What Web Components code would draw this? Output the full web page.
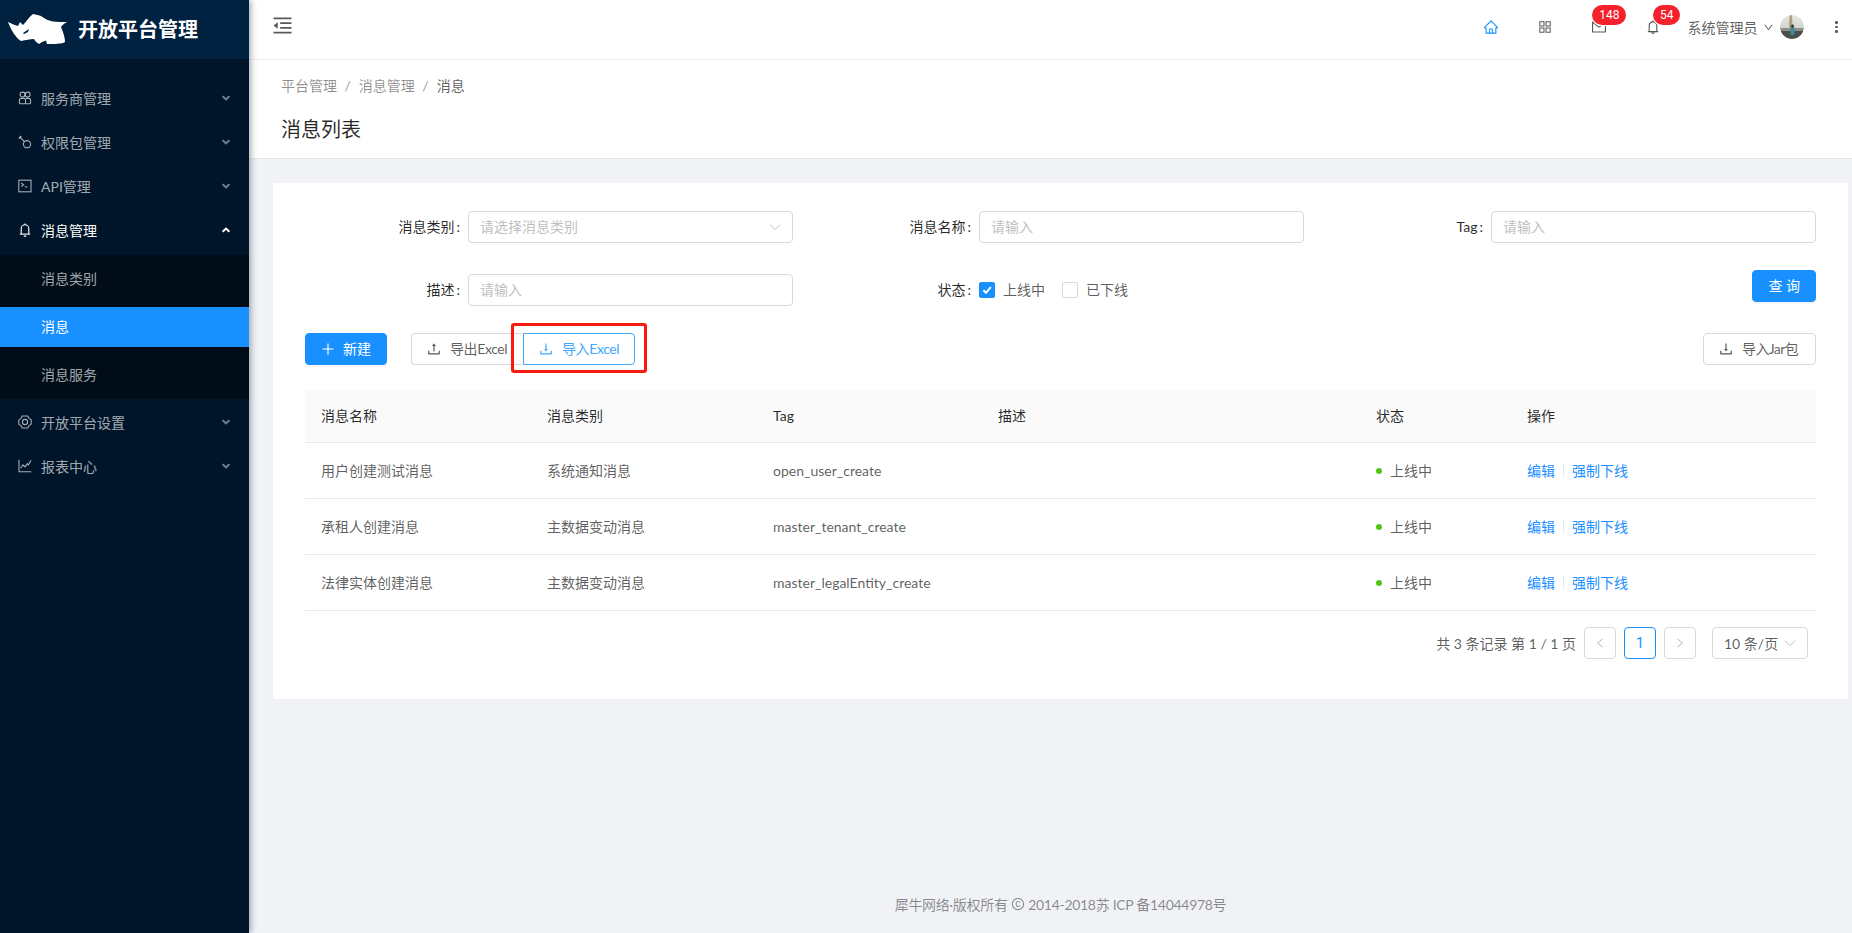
<!DOCTYPE html>
<html lang="zh-CN">
<head>
<meta charset="utf-8">
<title>消息列表</title>
<style>
html,body{margin:0;padding:0;height:100%;overflow:hidden}
body{font:14px/1.5 Lato,"Noto Sans CJK SC",sans-serif;color:rgba(0,0,0,.65);background:#f0f2f5}
</style>
</head>
<body>
<x-app>
  <x-sidebar slot="side">
    <x-menu-item icon="team">服务商管理</x-menu-item>
    <x-menu-item icon="key">权限包管理</x-menu-item>
    <x-menu-item icon="term">API管理</x-menu-item>
    <x-menu-item icon="mbell" open>消息管理</x-menu-item>
    <x-submenu>
      <x-sub-item>消息类别</x-sub-item>
      <x-sub-item selected>消息</x-sub-item>
      <x-sub-item>消息服务</x-sub-item>
    </x-submenu>
    <x-menu-item icon="gear">开放平台设置</x-menu-item>
    <x-menu-item icon="mchart">报表中心</x-menu-item>
  </x-sidebar>

  <x-topbar slot="main"></x-topbar>
  <x-page-head slot="main"></x-page-head>
  <x-card slot="main">
    <x-form-row>
      <x-field label="消息类别"><x-input placeholder="请选择消息类别" select></x-input></x-field>
      <x-field label="消息名称"><x-input placeholder="请输入"></x-input></x-field>
      <x-field label="Tag"><x-input placeholder="请输入"></x-input></x-field>
    </x-form-row>
    <x-form-row>
      <x-field label="描述"><x-input placeholder="请输入"></x-input></x-field>
      <x-field label="状态"><x-check checked>上线中</x-check><x-check>已下线</x-check></x-field>
      <x-query-cell><x-btn primary style="padding:0 15px">查 询</x-btn></x-query-cell>
    </x-form-row>
    <x-toolbar>
      <x-btn primary icon="plus">新建</x-btn>
      <x-btn icon="upload" noright style="margin-left:24px;width:112px" ls="-.4">导出Excel</x-btn>
      <x-marked><x-btn icon="download" hot style="width:112px" ls="-.4">导入Excel</x-btn></x-marked>
      <x-btn icon="download" style="margin-left:auto;width:113px" ls="-.6">导入Jar包</x-btn>
    </x-toolbar>
    <x-msg-table>
      <x-row head><span>消息名称</span><span>消息类别</span><span>Tag</span><span>描述</span><span>状态</span><span>操作</span></x-row>
      <x-row><span>用户创建测试消息</span><span>系统通知消息</span><span>open_user_create</span><span></span><x-status>上线中</x-status><x-actions></x-actions></x-row>
      <x-row><span>承租人创建消息</span><span>主数据变动消息</span><span>master_tenant_create</span><span></span><x-status>上线中</x-status><x-actions></x-actions></x-row>
      <x-row><span>法律实体创建消息</span><span>主数据变动消息</span><span>master_legalEntity_create</span><span></span><x-status>上线中</x-status><x-actions></x-actions></x-row>
    </x-msg-table>
    <x-pager></x-pager>
  </x-card>
  <x-foot slot="main"></x-foot>
</x-app>

<script>
const P={
home:'M946.5 505L560.1 118.8l-25.9-25.9a31.5 31.5 0 0 0-44.4 0L77.5 505a63.9 63.9 0 0 0-18.8 46c.4 35.2 29.7 63.3 64.9 63.3h42.5V940h691.8V614.3h43.4c17.1 0 33.2-6.7 45.3-18.8a63.6 63.6 0 0 0 18.7-45.3c0-17-6.7-33.1-18.8-45.2zM568 868H456V664h112v204zm217.9-325.7V868H632V640c0-22.1-17.9-40-40-40H432c-22.1 0-40 17.9-40 40v228H238.1V542.3h-96l370-369.7 23.1 23.1L882 542.3h-96.1z',
apps:'M464 144H160c-8.8 0-16 7.2-16 16v304c0 8.8 7.2 16 16 16h304c8.8 0 16-7.2 16-16V160c0-8.8-7.2-16-16-16zm-52 268H212V212h200v200zm452-268H560c-8.8 0-16 7.2-16 16v304c0 8.8 7.2 16 16 16h304c8.8 0 16-7.2 16-16V160c0-8.8-7.2-16-16-16zm-52 268H612V212h200v200zM464 544H160c-8.8 0-16 7.2-16 16v304c0 8.8 7.2 16 16 16h304c8.8 0 16-7.2 16-16V560c0-8.8-7.2-16-16-16zm-52 268H212V612h200v200zm452-268H560c-8.8 0-16 7.2-16 16v304c0 8.8 7.2 16 16 16h304c8.8 0 16-7.2 16-16V560c0-8.8-7.2-16-16-16zm-52 268H612V612h200v200z',
mail:'M928 160H96c-17.7 0-32 14.3-32 32v640c0 17.7 14.3 32 32 32h832c17.7 0 32-14.3 32-32V192c0-17.7-14.3-32-32-32zm-40 110.8V792H136V270.8l-27.6-21.5 39.3-50.5 42.8 33.3h643.1l42.8-33.3 39.3 50.5-27.7 21.5zM833.6 232L512 482 190.4 232l-42.8-33.3-39.3 50.5 27.6 21.5 341.6 265.6a55.99 55.99 0 0 0 68.7 0L888 270.8l27.6-21.5-39.3-50.5-42.7 33.2z',
bell:'M816 768h-24V428c0-141.1-104.3-257.7-240-277.1V112c0-22.1-17.9-40-40-40s-40 17.9-40 40v38.9c-135.7 19.4-240 136-240 277.1v340h-24c-17.7 0-32 14.3-32 32v32c0 4.4 3.6 8 8 8h216c0 61.8 50.2 112 112 112s112-50.2 112-112h216c4.4 0 8-3.6 8-8v-32c0-17.7-14.3-32-32-32zM512 888c-26.5 0-48-21.5-48-48h96c0 26.5-21.5 48-48 48zM304 768V428c0-55.6 21.6-107.8 60.9-147.1S456.4 220 512 220c55.6 0 107.8 21.6 147.1 60.9S720 372.4 720 428v340H304z',
down:'M884 256h-75c-5.1 0-9.9 2.5-12.9 6.6L512 654.2 227.9 262.6c-3-4.1-7.8-6.6-12.9-6.6h-75c-6.5 0-10.3 7.4-6.5 12.7l352.6 486.1c12.8 17.6 39 17.6 51.7 0l352.6-486.1c3.9-5.3.1-12.7-6.4-12.7z',
upload:'M400 317.7h73.9V656c0 4.4 3.6 8 8 8h60c4.4 0 8-3.6 8-8V317.7H624c6.7 0 10.4-7.7 6.3-12.9L518.3 163a8 8 0 0 0-12.6 0l-112 141.7c-4.1 5.3-.4 13 6.3 13zM878 626h-60c-4.4 0-8 3.6-8 8v154H214V634c0-4.4-3.6-8-8-8h-60c-4.4 0-8 3.6-8 8v198c0 17.7 14.3 32 32 32h684c17.7 0 32-14.3 32-32V634c0-4.4-3.6-8-8-8z',
download:'M505.7 661a8 8 0 0 0 12.6 0l112-141.7c4.1-5.2.4-12.9-6.3-12.9h-74.1V168c0-4.4-3.6-8-8-8h-60c-4.4 0-8 3.6-8 8v338.3H400c-6.7 0-10.4 7.7-6.3 12.9l112 141.8zM878 626h-60c-4.4 0-8 3.6-8 8v154H214V634c0-4.4-3.6-8-8-8h-60c-4.4 0-8 3.6-8 8v198c0 17.7 14.3 32 32 32h684c17.7 0 32-14.3 32-32V634c0-4.4-3.6-8-8-8z',
plus:'M482 152h60q8 0 8 8v704q0 8-8 8h-60q-8 0-8-8V160q0-8 8-8zM176 474h672q8 0 8 8v60q0 8-8 8H176q-8 0-8-8v-60q0-8 8-8z',
fold:'M408 442h504v-72H408zM408 654h504v-72H408zM912 160H112v72h800zM912 792H112v72h800zM112 512 300 372V652z',
left:'M724 218.3V141c0-6.7-7.7-10.4-12.9-6.3L260.3 486.8a31.86 31.86 0 0 0 0 50.3l450.8 352.1c5.3 4.1 12.9.4 12.9-6.3v-77.3c0-4.9-2.3-9.6-6.1-12.6l-360-281 360-281.1c3.8-3 6.1-7.7 6.1-12.6z',
right:'M765.7 486.8L314.9 134.7A7.97 7.97 0 0 0 302 141v77.3c0 4.9 2.3 9.6 6.1 12.6l360 281.1-360 281.1c-3.9 3-6.1 7.7-6.1 12.6V883c0 6.7 7.7 10.4 12.9 6.3l450.8-352.1a31.96 31.96 0 0 0 0-50.4z',
copy:'M512 64C264.6 64 64 264.6 64 512s200.6 448 448 448 448-200.6 448-448S759.4 64 512 64zm0 820c-205.4 0-372-166.6-372-372s166.6-372 372-372 372 166.6 372 372-166.6 372-372 372zm5.6-532.7c53 0 89 33.8 93 83.4.3 4.2 3.8 7.4 8 7.4h56.7c2.6 0 4.7-2.1 4.7-4.7 0-86.7-68.4-147.4-162.7-147.4C407.4 290 344 364.2 344 486v52.3C344 659.8 407.4 734 517.3 734c94 0 162.7-58.8 162.7-141.4 0-2.6-2.1-4.7-4.7-4.7h-56.8c-4.2 0-7.6 3.2-8 7.3-4.2 46.1-40.1 77.8-93 77.8-65.3 0-102.1-47.9-102.1-133.6v-52.6c.1-87 37-135.5 102.2-135.5z'
};
const STROKE={
team:'<g fill="none" stroke="currentColor" stroke-width="1.1"><circle cx="4.6" cy="3.6" r="2.5"/><circle cx="9.6" cy="3.6" r="2.5"/><path d="M1.4 9.2a1.8 1.8 0 0 1 1.8-1.8h2.6a1.8 1.8 0 0 1 1.8 1.8v2.6a1 1 0 0 1-1 1H2.4a1 1 0 0 1-1-1z"/><path d="M7.6 7.4h3.2a1.8 1.8 0 0 1 1.8 1.8v2.6a1 1 0 0 1-1 1H7.6"/></g>',
key:'<g fill="none" stroke="currentColor" stroke-width="1.1"><circle cx="9" cy="9.2" r="3.6"/><path d="M6.4 6.6 1.9 2.1"/><path d="M.9 3.4 3.3 1" stroke-width="1.4"/></g>',
term:'<g fill="none" stroke="currentColor" stroke-width="1.1"><rect x=".8" y="1.2" width="12.2" height="11.6"/><path d="M3.2 4 5.6 5.8 3.2 7.6"/><path d="M6.8 7.9h2.6"/></g>',
gear:'<g fill="none" stroke="currentColor" stroke-width="1.1"><path d="M4.2 1h5.6l1.2 2.4 2.2 1.5v4.2L11 10.6 9.8 13H4.2L3 10.6.8 9.1V4.9L3 3.4z" stroke-linejoin="round"/><circle cx="7" cy="7" r="2.6"/></g>',
mbell:'<g fill="none" stroke="currentColor" stroke-width="1.1"><path d="M3.2 11V5.6a3.8 3.8 0 0 1 7.6 0V11"/><path d="M1.8 11.1h10.4"/><path d="M5.8 13.1h2.4" stroke-width="1.3"/><path d="M7 .4v1.4"/></g>',
mchart:'<g fill="none" stroke="currentColor" stroke-width="1.1"><path d="M1 .8v12h12.4"/><path d="M2.6 9.2 5 5.8l2 2 2.3-3.2 1 1.4 2.7-4.6"/></g>'
};
const icon=(n,s=14,extra='')=>STROKE[n]
  ?`<svg width="${s}" height="${s}" viewBox="0 0 14 14" style="display:block;flex:none;${extra}" aria-hidden="true">${STROKE[n]}</svg>`
  :`<svg width="${s}" height="${s}" viewBox="0 0 1024 1024" fill="currentColor" style="display:block;flex:none;${extra}" aria-hidden="true"><path d="${P[n]}"/></svg>`;

function def(name,css,html){
  customElements.define(name,class extends HTMLElement{
    connectedCallback(){
      if(this.shadowRoot)return;
      this.attachShadow({mode:'open'}).innerHTML=`<style>${css}</style>`+(typeof html==='function'?html(this):html);
    }
  });
}

def('x-app',`:host{display:flex;height:100vh;overflow:hidden}
.m{flex:1;min-width:0;display:flex;flex-direction:column}`,
`<slot name="side"></slot><div class="m"><slot name="main"></slot></div>`);

const RHINO=`<svg width="66" height="42" viewBox="0 0 66 42" style="display:block;flex:none;margin-left:4px" aria-hidden="true"><path fill="#fff" d="M4 13C8 15 11 16 14 17L16 13 19 16C22 13 25 8 29 5 32 6 35 6 37 7 41 10 45 12 49 12.5 53 13 58 13 63 13 60 15 58 16 57 18 59 23 61 28 61 33 58 35 50 35 43 35L42 31.5 38 33 35 35C33 34 31 32 30 30 26 30 22 31 17 32 12 29 7 21 4 13Z"/><path fill="#002140" d="M19 24 25 20 24 23 20 25Z"/></svg>`;
def('x-sidebar',`:host{display:block;flex:none;width:249px;height:100vh;background:#001529;box-shadow:2px 0 6px rgba(0,21,41,.35);position:relative;z-index:3}
.logo{height:59px;background:#002140;display:flex;align-items:center;box-sizing:border-box;padding-top:1px}
.t{margin-left:8px;margin-top:-2px;font-size:20px;font-weight:700;color:#fff;line-height:30px;font-family:"Noto Sans CJK SC",sans-serif}
.menu{padding-top:20px;display:flex;flex-direction:column;gap:4px}`,
`<div class="logo">${RHINO}<span class="t">开放平台管理</span></div><div class="menu"><slot></slot></div>`);

def('x-menu-item',`:host{display:flex;align-items:center;height:40px;padding-left:18px;color:rgba(255,255,255,.65);font-size:14px}
:host([open]){color:#fff}
.l{margin-left:9px;flex:1;margin-top:-2px}
.c{margin-right:19px;display:block;margin-top:-2px}`,
h=>`${icon(h.getAttribute('icon'),14,'margin-top:-2px')}<span class="l"><slot></slot></span>
<svg class="c" width="8" height="6" viewBox="0 0 8 6" aria-hidden="true"><path d="${h.hasAttribute('open')?'M.6 4.8 4 1.6l3.4 3.2':'M.6 1.2 4 4.4l3.4-3.2'}" fill="none" stroke="currentColor" stroke-opacity="${h.hasAttribute('open')?1:.7}" stroke-width="2"/></svg>`);

def('x-submenu',`:host{display:flex;flex-direction:column;gap:8px;background:#000c17;padding:4px 0}`,`<slot></slot>`);
def('x-sub-item',`:host{display:flex;align-items:center;height:40px;padding-left:41px;color:rgba(255,255,255,.65);padding-bottom:2px;box-sizing:border-box}
:host([selected]){background:#1890ff;color:#fff}`,`<slot></slot>`);

def('x-topbar',`:host{display:flex;align-items:flex-start;flex:none;height:60px;box-sizing:border-box;background:#fff;border-bottom:1px solid #f0f0f0;color:rgba(0,0,0,.65)}
.fold{margin:14px 0 0 22px;color:rgba(0,0,0,.65)}
.r{margin-left:auto;display:flex;align-items:center;height:54px}
.cell{width:54px;height:54px;display:flex;align-items:center;justify-content:center;position:relative}
.badge{position:absolute;top:5px;right:0;height:20px;line-height:20px;padding:0 7px;border-radius:10px;background:#f5222d;color:#fff;font-size:12px;font-family:Roboto,sans-serif;box-shadow:0 0 0 1px #fff}
.name{margin-left:7px;white-space:nowrap}
.avatar{margin-left:6px;display:block;border-radius:50%}
.more{margin-left:31px;margin-right:14px;display:flex;flex-direction:column;gap:2.2px}
.more i{display:block;width:2.6px;height:2.6px;background:#595959;border-radius:50%}`,
`<span class="fold">${icon('fold',23)}</span>
<div class="r">
 <div class="cell" style="color:#1890ff">${icon('home',16)}</div>
 <div class="cell">${icon('apps',16)}</div>
 <div class="cell">${icon('mail',16)}<span class="badge">148</span></div>
 <div class="cell">${icon('bell',16)}<span class="badge">54</span></div>
 <span class="name">系统管理员</span>
 <span style="margin-left:6px">${icon('down',11)}</span>
 <svg class="avatar" width="24" height="24" viewBox="0 0 24 24" aria-hidden="true"><defs><clipPath id="c"><circle cx="12" cy="12" r="12"/></clipPath><linearGradient id="s" x1="0" y1="0" x2="0" y2="1"><stop offset="0" stop-color="#e8e6e0"/><stop offset="1" stop-color="#c4c6c2"/></linearGradient></defs><g clip-path="url(#c)"><rect width="24" height="24" fill="url(#s)"/><rect x="0" y="13" width="24" height="3" fill="#8d8f86"/><rect y="16" width="24" height="8" fill="#4a4f4c"/><path d="M9.5 0h2.5l.7 14H9z" fill="#b09f7d"/><rect x="10.5" y="12" width="4" height="8" rx="1" fill="#3f8a96"/><circle cx="12.5" cy="11" r="1.5" fill="#3a2f2a"/></g></svg>
 <div class="more"><i></i><i></i><i></i></div>
</div>`);

def('x-page-head',`:host{display:block;flex:none;height:99px;box-sizing:border-box;background:#fff;border-bottom:1px solid #e8e8e8;padding:15px 0 0 32px}
.b{display:flex;line-height:21px;color:rgba(0,0,0,.45)}
.s{margin:0 8px 0 7.5px}
.cur{color:rgba(0,0,0,.65)}
h1{margin:19px 0 0;font-size:20px;font-weight:400;line-height:28px;color:rgba(0,0,0,.85)}`,
`<div class="b"><span>平台管理</span><span class="s">/</span><span>消息管理</span><span class="s">/</span><span class="cur">消息</span></div><h1>消息列表</h1>`);

def('x-card',`:host{display:block;flex:none;margin:24px 4px 0 24px;background:#fff;padding:28px 32px 40px 32px;height:516px;box-sizing:border-box}`,`<slot></slot>`);
def('x-form-row',`:host{display:grid;grid-template-columns:488px 511px 512px;height:32px;margin-bottom:31px}`,`<slot></slot>`);
def('x-field',`:host{display:flex;align-items:center;justify-content:flex-end;min-width:0}
.lab{white-space:nowrap;color:rgba(0,0,0,.85);margin-right:8px;padding-bottom:2px}
.col{margin-left:2px}
.c{display:flex;align-items:center;flex:none;width:325px}`,
h=>`<span class="lab">${h.getAttribute('label')}<span class="col">:</span></span><div class="c"><slot></slot></div>`);
def('x-input',`:host{display:flex;align-items:center;width:100%;height:32px;box-sizing:border-box;border:1px solid #d9d9d9;border-radius:4px;padding:0 11px 2px;color:#bfbfbf;background:#fff}
span{flex:1}
svg{margin-top:2px}`,
h=>`<span>${h.getAttribute('placeholder')}</span>${h.hasAttribute('select')?'<svg width="12" height="12" viewBox="0 0 12 12" aria-hidden="true"><path d="M1 3.6 6 8.6l5-5" fill="none" stroke="#bfbfbf" stroke-width="1"/></svg>':''}`);
def('x-check',`:host{display:inline-flex;align-items:center;margin-right:17px;color:rgba(0,0,0,.65)}
.b{width:16px;height:16px;box-sizing:border-box;border:1px solid #d9d9d9;border-radius:2px;background:#fff;margin-right:8px;display:flex;align-items:center;justify-content:center}
:host([checked]) .b{background:#1890ff;border-color:#1890ff}
.t{padding-bottom:1px}`,
h=>`<span class="b">${h.hasAttribute('checked')?'<svg width="12" height="12" viewBox="0 0 12 12" aria-hidden="true"><path d="M2.4 6.2 5 8.8l4.8-5.6" fill="none" stroke="#fff" stroke-width="2"/></svg>':''}</span><span class="t"><slot></slot></span>`);
def('x-query-cell',`:host{display:flex;justify-content:flex-end;margin-top:-4px}`,`<slot></slot>`);

def('x-btn',`:host{display:inline-flex;align-items:center;height:32px;box-sizing:border-box;padding:0 15px 0 14px;border:1px solid #d9d9d9;border-radius:4px;background:#fff;color:rgba(0,0,0,.65);white-space:nowrap;flex:none;gap:8px}
:host([primary]){background:#1890ff;border-color:#1890ff;color:#fff;box-shadow:0 2px 0 rgba(0,0,0,.035);gap:7px}
:host([hot]){border-color:#40a9ff;color:#40a9ff;position:relative;z-index:1;border-radius:0 4px 4px 0}
:host([noright]){border-right-color:transparent;border-radius:4px 0 0 4px}
.t{padding-bottom:2px}`,
h=>`${h.getAttribute('icon')?icon(h.getAttribute('icon'),16):''}<span class="t" style="letter-spacing:${h.getAttribute('ls')||0}px"><slot></slot></span>`);
def('x-toolbar',`:host{display:flex;align-items:center;height:32px;margin-top:-4px;margin-bottom:25px}`,`<slot></slot>`);
def('x-marked',`:host{display:block;position:relative}
.box{position:absolute;left:-12px;right:-12px;top:-10px;bottom:-8px;border:3px solid #fa1a10;border-radius:3px;pointer-events:none;z-index:2;box-sizing:border-box}`,
`<slot></slot><span class="box"></span>`);

def('x-msg-table',`:host{display:block}`,`<slot></slot>`);
def('x-row',`:host{display:grid;grid-template-columns:226px 226px 225px 378px 151px 305px;align-items:center;height:56px;box-sizing:border-box;border-bottom:1px solid #e8e8e8;padding-bottom:1px}
:host([head]){height:53px;background:#fafafa;color:rgba(0,0,0,.85);padding-bottom:2px}
::slotted(*){padding-left:16px;box-sizing:border-box;min-width:0}`,`<slot></slot>`);
def('x-status',`:host{display:flex;align-items:center}
i{width:6px;height:6px;border-radius:50%;background:#52c41a;margin-right:8px;margin-top:2px}
span{margin-top:1px}`,`<i></i><span><slot></slot></span>`);
def('x-actions',`:host{display:flex;align-items:center;color:#1890ff}
i{width:1px;height:14px;background:#e8e8e8;margin:0 8px}`,`<span>编辑</span><i></i><span>强制下线</span>`);

def('x-pager',`:host{display:flex;align-items:center;justify-content:flex-end;margin-top:16px;padding-right:8px;height:32px}
.tot{margin-right:8px}
.p{width:32px;height:32px;box-sizing:border-box;border:1px solid #d9d9d9;border-radius:4px;display:flex;align-items:center;justify-content:center;color:rgba(0,0,0,.25);margin-right:8px;font-family:Roboto,sans-serif}
.on{border-color:#1890ff;color:#1890ff}
.sel{width:96px;height:32px;box-sizing:border-box;border:1px solid #d9d9d9;border-radius:4px;display:flex;align-items:center;justify-content:space-between;padding:0 11px;margin-left:8px}`,
`<span class="tot">共 3 条记录 第 1 / 1 页</span>
<span class="p">${icon('left',12)}</span><span class="p on">1</span><span class="p">${icon('right',12)}</span>
<span class="sel"><span>10 条/页</span><svg width="12" height="12" viewBox="0 0 12 12" aria-hidden="true"><path d="M1 3.6 6 8.6l5-5" fill="none" stroke="#bfbfbf" stroke-width="1"/></svg></span>`);

def('x-foot',`:host{display:flex;align-items:center;justify-content:center;margin-top:auto;height:56px;flex:none;color:rgba(0,0,0,.45);white-space:pre;padding:0 0 2px 20px;box-sizing:border-box;letter-spacing:-.3px}`,
`<span>犀牛网络·版权所有 </span>${icon('copy',14)}<span> 2014-2018苏 ICP 备14044978号</span>`);
</script>
</body>
</html>
